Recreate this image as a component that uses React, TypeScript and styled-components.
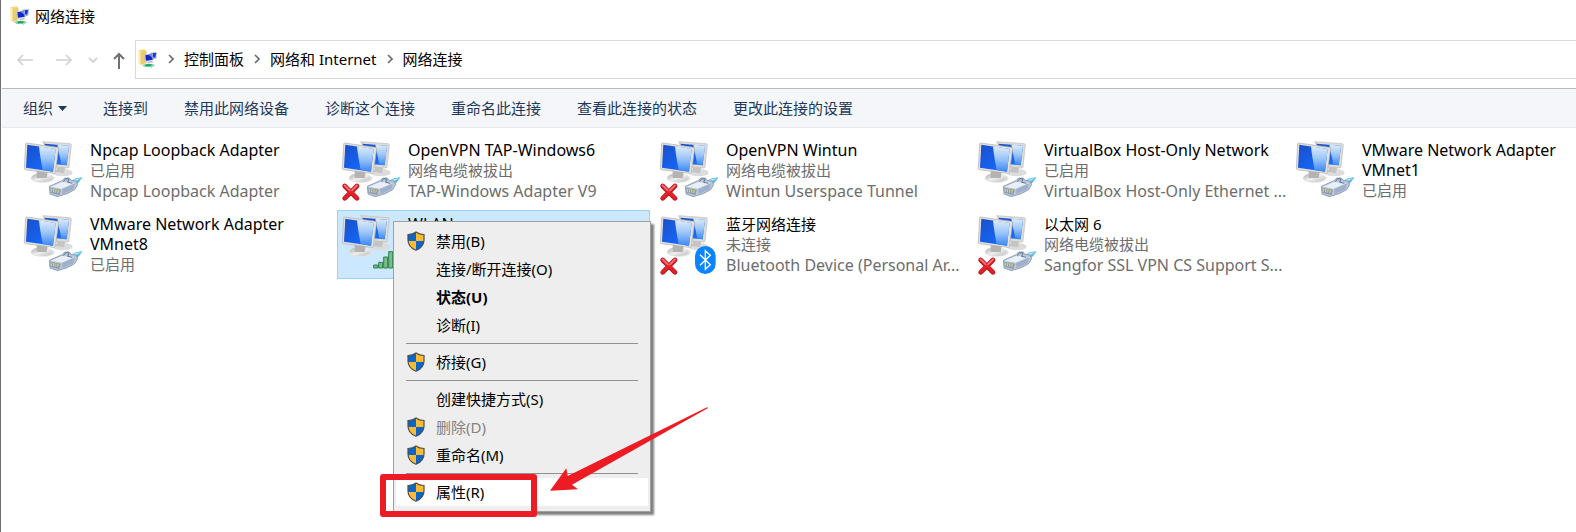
import React from "react";
import styled, { createGlobalStyle } from "styled-components";

const GlobalStyle = createGlobalStyle`
  * { box-sizing: border-box; }
  body {
    margin: 0;
    background: #fff;
    color: #000;
    font-family: "Noto Sans", "Noto Sans CJK SC", sans-serif;
    font-size: 15px;
    line-height: 20px;
    overflow: hidden;
  }
  button {
    margin: 0;
    padding: 0;
    border: 0;
    background: none;
    color: inherit;
    font: inherit;
    text-align: left;
    white-space: nowrap;
  }
  svg { display: block; flex: none; }
`;

const Window = styled.div`
  min-height: 100vh;
  border-left: 1px solid #6e6e6e;
  padding-left: 1px;
`;

const TitleBar = styled.header`
  display: flex;
  align-items: center;
  gap: 5px;
  height: 32px;
  padding-left: 8px;
`;

const WindowTitle = styled.h1`
  margin: 0;
  font-size: 15px;
  font-weight: 400;
`;

const NavBar = styled.nav`
  display: flex;
  align-items: center;
  padding-top: 8px;
  padding-bottom: 9px;
`;

const NavButtons = styled.div`
  display: flex;
  align-items: center;
  width: 133px;
  padding-left: 14px;
`;

const NavButton = styled.button<{ $width: number }>`
  width: ${(p) => p.$width}px;
  color: ${(p) => (p.disabled ? "#d2d2d2" : "#707070")};
`;

const AddressBar = styled.div`
  display: flex;
  flex: 1;
  align-items: center;
  gap: 10px;
  height: 39px;
  padding-bottom: 2px;
  padding-left: 2px;
  border: 1px solid #d9d9d9;
  border-right: 0;
  color: #6a6a6a;
`;

const Crumb = styled.a`
  color: #000;
  text-decoration: none;
  white-space: nowrap;
`;

const Toolbar = styled.div`
  display: flex;
  align-items: center;
  gap: 36px;
  height: 40px;
  padding-left: 21px;
  background: #f4f6f9;
  border-top: 1px solid #b9b9b9;
  border-bottom: 1px solid #e5e7ea;
`;

const ToolButton = styled.button`
  display: flex;
  align-items: center;
  gap: 5px;
  color: #1e395b;
`;

const Grid = styled.ul`
  display: grid;
  grid-template-columns: repeat(5, 313px);
  grid-auto-rows: 69px;
  gap: 5px;
  margin: 0;
  padding: 8px 0 0 17px;
  list-style: none;
`;

const Cell = styled.li<{ $selected?: boolean }>`
  position: relative;
  display: flex;
  gap: 1px;
  padding: 3px 1px 1px;
  border: 1px solid ${(p) => (p.$selected ? "#99d1ff" : "transparent")};
  background: ${(p) => (p.$selected ? "#cce8ff" : "transparent")};
`;

const CellText = styled.div`
  flex: 1;
  min-width: 0;
`;

const Name = styled.div<{ $latin: boolean }>`
  font-size: ${(p) => (p.$latin ? 16 : 15)}px;
  line-height: 20px;
`;

const Detail = styled.div<{ $latin: boolean }>`
  color: #6d6d6d;
  font-size: ${(p) => (p.$latin ? 16 : 15)}px;
  line-height: 21px;
  white-space: nowrap;
`;

const Menu = styled.div`
  position: absolute;
  z-index: 1;
  top: 10px;
  left: 55px;
  width: 258px;
  padding: 5px 2px;
  background: #eee;
  border: 1px solid #a0a0a0;
  box-shadow: 3px 3px 2px rgba(0, 0, 0, 0.5);
`;

const MenuItem = styled.button<{ $hot?: boolean; $bold?: boolean }>`
  display: grid;
  grid-template-columns: 18px 1fr;
  align-items: center;
  gap: 11px;
  width: 100%;
  height: 28px;
  padding-left: 11px;
  background: ${(p) => (p.$hot ? "#fff" : "transparent")};
  color: ${(p) => (p.disabled ? "#838383" : "#000")};
  font-weight: ${(p) => (p.$bold ? 700 : 400)};
`;

const Separator = styled.hr`
  height: 1px;
  margin: 4px 10px;
  border: 0;
  background: #919191;
`;

const RedBox = styled.div`
  position: absolute;
  right: 113px;
  bottom: -6px;
  width: 157px;
  height: 43px;
  border: 6px solid #ed1c24;
  border-radius: 3px;
  pointer-events: none;
`;

const RedArrow = styled.svg`
  position: absolute;
  left: 155px;
  bottom: 16px;
  pointer-events: none;
`;

const Shield = () => (
  <svg width="18" height="20" viewBox="0 0 18 20" aria-hidden="true">
    <clipPath id="shield">
      <path d="M9 1C7 2.6 4 3.5 1 3.5V9c0 5 3.5 8.500 8 10.300C13.500 17.500 17 14 17 9V3.500C14 3.500 11 2.600 9 1Z" />
    </clipPath>
    <g clipPath="url(#shield)">
      <path fill="#0c65c8" d="M0 0h9v10H0zM9 10h9v10H9z" />
      <path fill="#fdbb34" d="M9 0h9v10H9zM0 10h9v10H0z" />
    </g>
    <path
      d="M9 1C7 2.600 4 3.500 1 3.500V9c0 5 3.500 8.500 8 10.300C13.500 17.500 17 14 17 9V3.500C14 3.500 11 2.600 9 1Z"
      fill="none"
      stroke="#4d4f53"
      strokeWidth="1.200"
    />
  </svg>
);

const FolderIcon = () => (
  <svg width="20" height="20" viewBox="0 0 60 60" aria-hidden="true">
    <path d="M2 4 20 1 25 5v36L7 47 2 42Z" fill="#f0d873" />
    <path d="M2 4 8 9v38l-6-5Z" fill="#fbf0b4" />
    <path d="M8 9 25 5v36L8 47Z" fill="#e6cb78" />
    <path d="m36 11 21-2-2 20-17 3Z" fill="#a9bae0" />
    <path d="m40 13 14-1-2 13-12 3Z" fill="#1b2fc4" />
    <path d="m19 17 25-4 3 20-25 5Z" fill="#b9cdea" />
    <path d="m22 19 20-3 2 16-20 3Z" fill="#1526cb" />
    <path d="m33 18 9-2 2 11Z" fill="#6d9dfa" />
    <path d="m27 38 15-3 5 5-17 4Z" fill="#c3c8d2" />
    <path d="M12 49 23 43v3l22-1 6 4-12 8-1-4-18 1Z" fill="#8fd6ae" />
    <path d="M24 46h18l-4 6H22Z" fill="#12a05c" />
  </svg>
);

const Chevron = () => (
  <svg width="6" height="10" viewBox="0 0 6 10" aria-hidden="true">
    <path d="m1 1 4 4-4 4" fill="none" stroke="currentColor" strokeWidth="1.600" />
  </svg>
);

type Badge = "plug" | "signal" | "bluetooth";

const Plug = () => (
  <g>
    <path d="M158 134c10-5 20-6 30-7l-7 9c-3 7-9 11-17 14Z" fill="#58bfe2" />
    <path d="m158 135 25-6-20 13Z" fill="#bcecf8" />
    <path d="m88 154 38-17 8-8 14 0 5 7 16 2 4 11-9 15-22 12-30 9-22-8Z" fill="#b9c6d8" stroke="#6e86a5" strokeWidth="2" />
    <path d="m92 155 34-14 38 3-38 17Z" fill="#e8eff7" />
    <path d="m126 162 38-16-4 17-32 14Z" fill="#9eb0cb" />
    <path d="m130 140 7-9 10 1-4 10 14 3" fill="none" stroke="#607795" strokeWidth="3" />
    <path d="m91 158 31 6-4 16-26-7Z" fill="#8e9aa6" />
    <path d="m96 161-2 9m8-8-2 10m8-9-1 10m8-8-2 9" stroke="#e6dd79" strokeWidth="3" />
  </g>
);

const Signal = () => (
  <g fill="#79bd8b" stroke="#2f7f4c" strokeWidth="3">
    <path d="M107 168h12v9h-12zM122 160h12v17h-12zM137 144h12v33h-12zM152 128h12v49h-12zM167 112h12v65h-12z" />
  </g>
);

const Bluetooth = () => (
  <g>
    <rect x="117" y="111" width="62" height="84" rx="31" fill="#0a84ff" />
    <path d="m132 137 31 30-15 14v-56l15 14-31 30" fill="none" stroke="#fff" strokeWidth="4" />
  </g>
);

const ConnectionIcon = ({ badge, off }: { badge: Badge; off?: boolean }) => (
  <svg width="68" height="62" viewBox="3 15 204 186" aria-hidden="true">
    <defs>
      <linearGradient id="screen" x1="0" y1="0" x2="1" y2="1">
        <stop offset="0" stopColor="#1a4fc9" />
        <stop offset="0.600" stopColor="#1663f0" />
        <stop offset="1" stopColor="#1b7cff" />
      </linearGradient>
      <linearGradient id="glare" x1="0" y1="0" x2="0" y2="1">
        <stop offset="0" stopColor="#dcecfc" />
        <stop offset="0.500" stopColor="#9ac4f8" />
        <stop offset="1" stopColor="#3a86f6" />
      </linearGradient>
      <linearGradient id="stand" x1="0" y1="0" x2="1" y2="1">
        <stop offset="0" stopColor="#a9a9a9" />
        <stop offset="0.500" stopColor="#efefef" />
        <stop offset="1" stopColor="#bababa" />
      </linearGradient>
    </defs>
    <ellipse cx="128" cy="113" rx="30" ry="11" fill="#dcdcdc" />
    <path d="m112 90 24 5-4 20-24-4Z" fill="#c4c4c4" />
    <path d="m68 20 83 6q3 1 3 4l-7 66q-1 4-5 3l-36-3Z" fill="#dedcd9" stroke="#bfbcb8" strokeWidth="2" />
    <path d="m73 26 74 6-7 59-34-3Z" fill="url(#screen)" />
    <path d="m112 29 35 3-7 59-16-2Z" fill="url(#glare)" />
    <ellipse cx="68" cy="130" rx="36" ry="13" fill="#e2e2e2" />
    <ellipse cx="66" cy="128" rx="32" ry="13" fill="url(#stand)" />
    <path d="m50 105 33 6-3 18H50Z" fill="#b4b3b2" />
    <path d="m20 24 92 13q5 1 4 5l-10 70q-1 4-6 3l-84-11q-4-1-3-5l4-72q0-3 3-3Z" fill="#e3e1de" stroke="#b1aeab" strokeWidth="2" />
    <path d="m22 29 85 13-8 68-81-12Z" fill="url(#screen)" />
    <path d="m57 34 50 8-8 68-31-5Q60 65 57 34Z" fill="url(#glare)" />
    {badge === "plug" && <Plug />}
    {badge === "signal" && <Signal />}
    {badge === "bluetooth" && <Bluetooth />}
    {off && (
      <g strokeLinecap="round">
        <path d="m20 153 37 37M57 153l-37 37" stroke="#b80f16" strokeWidth="14" />
        <path d="m20 152 37 37M57 152l-37 37" stroke="#e0222a" strokeWidth="10" />
        <path d="m20 151 15 15M57 151l-15 15" stroke="#f3777a" strokeWidth="5" />
      </g>
    )}
  </svg>
);

const ContextMenu = () => (
  <Menu role="menu">
    <MenuItem role="menuitem"><Shield /><span>禁用(B)</span></MenuItem>
    <MenuItem role="menuitem"><i /><span>连接/断开连接(O)</span></MenuItem>
    <MenuItem role="menuitem" $bold><i /><span>状态(U)</span></MenuItem>
    <MenuItem role="menuitem"><i /><span>诊断(I)</span></MenuItem>
    <Separator />
    <MenuItem role="menuitem"><Shield /><span>桥接(G)</span></MenuItem>
    <Separator />
    <MenuItem role="menuitem"><i /><span>创建快捷方式(S)</span></MenuItem>
    <MenuItem role="menuitem" disabled><Shield /><span>删除(D)</span></MenuItem>
    <MenuItem role="menuitem"><Shield /><span>重命名(M)</span></MenuItem>
    <Separator />
    <MenuItem role="menuitem" $hot><Shield /><span>属性(R)</span></MenuItem>
    <RedBox />
    <RedArrow width="159" height="90" viewBox="537 105 477 270" aria-hidden="true">
      <path d="m540 362 49-67 4 23 418-206q4 0 2 3L606 344l18 14Z" fill="#ed1c24" />
    </RedArrow>
  </Menu>
);

interface Connection {
  name: string;
  details: string[];
  badge: Badge;
  off?: boolean;
  selected?: boolean;
}

const connections: Connection[] = [
  { name: "Npcap Loopback Adapter", details: ["已启用", "Npcap Loopback Adapter"], badge: "plug" },
  { name: "OpenVPN TAP-Windows6", details: ["网络电缆被拔出", "TAP-Windows Adapter V9"], badge: "plug", off: true },
  { name: "OpenVPN Wintun", details: ["网络电缆被拔出", "Wintun Userspace Tunnel"], badge: "plug", off: true },
  { name: "VirtualBox Host-Only Network", details: ["已启用", "VirtualBox Host-Only Ethernet ..."], badge: "plug" },
  { name: "VMware Network Adapter VMnet1", details: ["已启用"], badge: "plug" },
  { name: "VMware Network Adapter VMnet8", details: ["已启用"], badge: "plug" },
  { name: "WLAN", details: [], badge: "signal", selected: true },
  { name: "蓝牙网络连接", details: ["未连接", "Bluetooth Device (Personal Ar..."], badge: "bluetooth", off: true },
  { name: "以太网 6", details: ["网络电缆被拔出", "Sangfor SSL VPN CS Support S..."], badge: "plug", off: true },
];

const isLatin = (text: string) => /[A-Za-z]/.test(text);

const commands = ["连接到", "禁用此网络设备", "诊断这个连接", "重命名此连接", "查看此连接的状态", "更改此连接的设置"];
const crumbs = ["控制面板", "网络和 Internet", "网络连接"];

export default function App() {
  return (
    <>
      <GlobalStyle />
      <Window>
        <TitleBar>
          <FolderIcon />
          <WindowTitle>网络连接</WindowTitle>
        </TitleBar>
        <NavBar>
          <NavButtons>
            <NavButton $width={39} disabled aria-label="后退">
              <svg width="18" height="14" viewBox="0 0 18 14">
                <path d="M17 7H2M7 2 2 7l5 5" fill="none" stroke="currentColor" strokeWidth="1.600" />
              </svg>
            </NavButton>
            <NavButton $width={33} disabled aria-label="前进">
              <svg width="18" height="14" viewBox="0 0 18 14">
                <path d="M1 7h15M11 2l5 5-5 5" fill="none" stroke="currentColor" strokeWidth="1.600" />
              </svg>
            </NavButton>
            <NavButton $width={24} disabled aria-label="最近">
              <svg width="10" height="8" viewBox="0 0 10 8">
                <path d="m1 2 4 4 4-4" fill="none" stroke="currentColor" strokeWidth="1.800" />
              </svg>
            </NavButton>
            <NavButton $width={16} aria-label="向上">
              <svg width="14" height="20" viewBox="0 0 14 20">
                <path d="M7 19V4M2 9l5-5 5 5" fill="none" stroke="currentColor" strokeWidth="2" />
              </svg>
            </NavButton>
          </NavButtons>
          <AddressBar>
            <FolderIcon />
            {crumbs.map((c) => (
              <React.Fragment key={c}>
                <Chevron />
                <Crumb href="#">{c}</Crumb>
              </React.Fragment>
            ))}
          </AddressBar>
        </NavBar>
        <Toolbar>
          <ToolButton>
            组织
            <svg width="9" height="5" viewBox="0 0 9 5" aria-hidden="true">
              <path d="M0 0h9L4.500 5Z" fill="currentColor" />
            </svg>
          </ToolButton>
          {commands.map((c) => (
            <ToolButton key={c}>{c}</ToolButton>
          ))}
        </Toolbar>
        <Grid>
          {connections.map((c) => (
            <Cell key={c.name} $selected={c.selected}>
              <ConnectionIcon badge={c.badge} off={c.off} />
              <CellText>
                <Name $latin={isLatin(c.name)}>{c.name}</Name>
                {c.details.map((d) => (
                  <Detail key={d} $latin={isLatin(d)}>{d}</Detail>
                ))}
              </CellText>
              {c.selected && <ContextMenu />}
            </Cell>
          ))}
        </Grid>
      </Window>
    </>
  );
}
